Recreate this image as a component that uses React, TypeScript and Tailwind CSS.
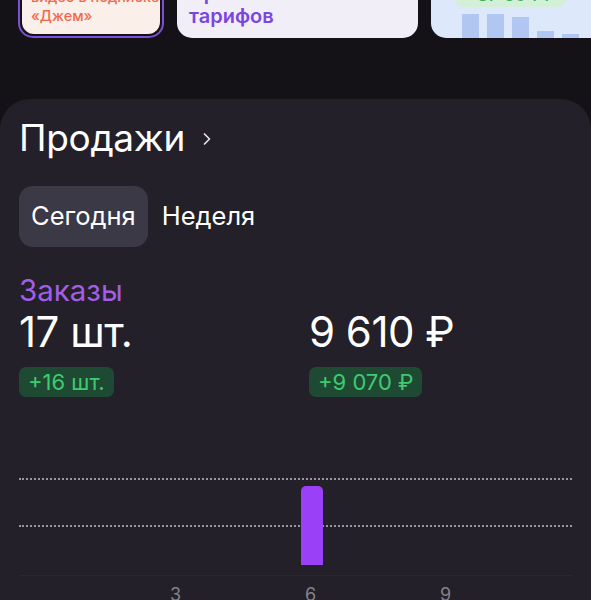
import { ChevronRight } from 'lucide-react'

const bars = [
    { h: 'h-[24px]' },
    { h: 'h-[24px]' },
    { h: 'h-[21px]' },
    { h: 'h-[7px]' },
    { h: 'h-[4px]' },
]

const TopCards = () => {
    return (
        <div className="h-[38px] overflow-hidden flex items-end gap-[13px] pl-[18px]">
            <div className="shrink-0 w-[146px] h-[100px] rounded-[15px] border-2 border-[#7b4fd6] p-[2px] bg-[#141217]">
                <div className="h-full rounded-[12px] bg-[#fbefea] px-[9px] flex flex-col justify-end pb-[9px] text-[14.5px] leading-[19px] font-medium text-[#ef6a4b] whitespace-nowrap overflow-hidden">
                    <span>Смотрите</span>
                    <span>видео в подписке</span>
                    <span>«Джем»</span>
                </div>
            </div>
            <div className="shrink-0 w-[241px] h-[100px] rounded-[15px] bg-[#f1eef8] px-[12px] flex flex-col justify-end pb-[10px] text-[20px] leading-[23px] font-semibold text-[#7a45e0]">
                <span>Сравнение</span>
                <span>тарифов</span>
            </div>
            <div className="shrink-0 w-[180px] h-[100px] rounded-[15px] bg-[#dde8fb] pl-[24px] flex flex-col justify-end">
                <div className="self-start rounded-[8px] bg-[#d3efd8] px-[10px] pb-[2px] text-[18px] leading-[20px] font-medium text-[#3fae5e] mb-[6px]">+87 604 ₽</div>
                <div className="flex items-end gap-[8px] h-[25px] pl-[7px]">
                    {bars.map((b, i) => (
                        <div key={i} className={`w-[17px] bg-[#b1c6f1] ${b.h}`} />
                    ))}
                </div>
            </div>
        </div>
    )
}

const Chart = () => {
    return (
        <div className="relative mt-[37px] h-[220px]">
            <div className="absolute left-0 right-0 top-[44px] border-t-2 border-dotted border-[#9a97a3]" />
            <div className="absolute left-0 right-0 top-[91px] border-t-2 border-dotted border-[#9a97a3]" />
            <div className="absolute left-0 right-0 top-[141px] border-t border-[#2a2730]" />
            <div className="absolute left-[282px] top-[52px] w-[22px] h-[79px] rounded-t-[5px] bg-[#9a40f6]" />
            <div className="absolute top-[147px] left-0 right-0 text-[18px] text-[#85828d]">
                <span className="absolute left-[151px]">3</span>
                <span className="absolute left-[286px]">6</span>
                <span className="absolute left-[421px]">9</span>
            </div>
        </div>
    )
}

const App = () => {
    return (
        <div className="w-[591px] h-[600px] overflow-hidden bg-[#141217] font-['Inter',sans-serif]">
            <TopCards />
            <div className="mt-[61px] rounded-t-[30px] bg-[#232029] px-[19px] pt-[16px] h-[600px]">
                <div className="flex items-center gap-[12px] text-white">
                    <h2 className="text-[37px] leading-[46px] tracking-[-0.3px]">Продажи</h2>
                    <ChevronRight className="mt-[2px]" size={20} strokeWidth={2} color="#e8e6ee" />
                </div>

                <div className="mt-[25px] flex items-center gap-[14px]">
                    <div className="h-[61px] px-[12px] rounded-[14px] bg-[#3c3946] flex items-center text-[25.5px] text-white">Сегодня</div>
                    <div className="text-[25.5px] text-white">Неделя</div>
                </div>

                <div className="mt-[26px] text-[29.5px] leading-[34px] text-[#a25ee9]">Заказы</div>
                <div className="flex">
                    <div className="w-[290px] flex flex-col items-start">
                        <div className="text-[42px] leading-[50px] text-white tracking-[-0.5px]">17 шт.</div>
                        <div className="mt-[10px] rounded-[7px] bg-[#1e4a33] px-[9px] text-[22px] leading-[30px] text-[#3fcb70]">+16 шт.</div>
                    </div>
                    <div className="flex flex-col items-start">
                        <div className="text-[42px] leading-[50px] text-white tracking-[-0.5px]">9 610 ₽</div>
                        <div className="mt-[10px] rounded-[7px] bg-[#1e4a33] px-[9px] text-[22px] leading-[30px] text-[#3fcb70]">+9 070 ₽</div>
                    </div>
                </div>

                <Chart />
            </div>
        </div>
    )
}

export default App
